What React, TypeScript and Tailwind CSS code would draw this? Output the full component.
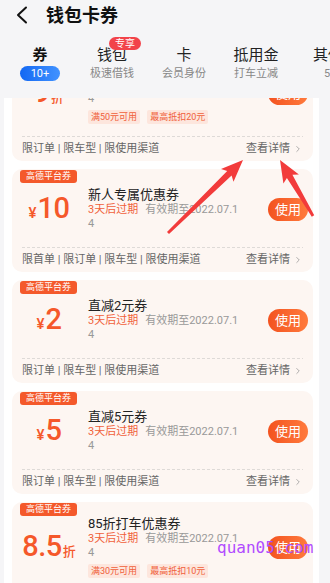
import { ChevronRight } from "lucide-react";

type Coupon = {
  amount: string;
  unit: "yuan" | "zhe";
  title: string;
  limits: string;
  tags?: string[];
};

const coupons: Coupon[] = [
  {
    amount: "9",
    unit: "zhe",
    title: "打车折扣券",
    limits: "限订单 | 限车型 | 限使用渠道",
    tags: ["满50元可用", "最高抵扣20元"],
  },
  { amount: "10", unit: "yuan", title: "新人专属优惠券", limits: "限首单 | 限订单 | 限车型 | 限使用渠道" },
  { amount: "2", unit: "yuan", title: "直减2元券", limits: "限订单 | 限车型 | 限使用渠道" },
  { amount: "5", unit: "yuan", title: "直减5元券", limits: "限订单 | 限车型 | 限使用渠道" },
  {
    amount: "8.5",
    unit: "zhe",
    title: "85折打车优惠券",
    limits: "限订单 | 限车型 | 限使用渠道",
    tags: ["满30元可用", "最高抵扣10元"],
  },
];

const tabs = [
  { label: "钱包", sub: "极速借钱", badge: "专享" },
  { label: "卡", sub: "会员身份" },
  { label: "抵用金", sub: "打车立减" },
];

function arrowPoints(x1: number, y1: number, x2: number, y2: number) {
  const dx = x2 - x1;
  const dy = y2 - y1;
  const len = Math.hypot(dx, dy);
  const ux = dx / len;
  const uy = dy / len;
  const nx = -uy;
  const ny = ux;
  const head = 22;
  const bx = x2 - ux * head;
  const by = y2 - uy * head;
  const pts = [
    [x1 + nx * 1.4, y1 + ny * 1.4],
    [bx + ux * 3 + nx * 3.2, by + uy * 3 + ny * 3.2],
    [bx + nx * 9, by + ny * 9],
    [x2, y2],
    [bx - nx * 9, by - ny * 9],
    [bx + ux * 3 - nx * 3.2, by + uy * 3 - ny * 3.2],
    [x1 - nx * 1.4, y1 - ny * 1.4],
  ];
  return pts.map((p) => `${p[0].toFixed(1)},${p[1].toFixed(1)}`).join(" ");
}

function CouponCard({ c }: { c: Coupon }) {
  return (
    <div className="relative ml-[8px] w-[301px] shrink-0 rounded-[10px] bg-[#fdf6f2] px-[10px] pt-[14px]">
      <span className="absolute left-[8px] top-[1px] h-[13px] rounded-[3px] bg-[#f4592b] px-[6px] text-[9px] leading-[13px] text-white">
        高德平台券
      </span>
      <div className="flex min-h-[52px] items-center">
        <div className="flex w-[54px] items-baseline justify-center text-[#f5582a]">
          {c.unit === "yuan" && <span className="mr-[1px] text-[15px] font-medium">¥</span>}
          <span className="text-[29px] font-medium leading-none tracking-[-0.5px]">{c.amount}</span>
          {c.unit === "zhe" && <span className="ml-[1px] text-[13px] font-medium">折</span>}
        </div>
        <div className="ml-[12px] w-[150px]">
          <div className="text-[13px] leading-[16px] text-[#222]">{c.title}</div>
          <div className="whitespace-nowrap text-[11px] leading-[14px] text-[#999]">
            <span className="mr-[7px] text-[#f0613a]">3天后过期</span>
            有效期至2022.07.1
          </div>
          <div className="text-[11px] leading-[14px] text-[#999]">4</div>
          {c.tags && (
            <div className="mt-[4px] flex gap-[7px]">
              {c.tags.map((t) => (
                <span key={t} className="h-[14px] rounded-[2px] bg-[#fde6dd] px-[3px] text-[9px] leading-[14px] text-[#f0603a]">
                  {t}
                </span>
              ))}
            </div>
          )}
        </div>
        <button className="-mr-[5px] ml-auto h-[23px] w-[40px] rounded-full bg-linear-to-r from-[#f3521f] to-[#ff7a3c] text-[13px] leading-[23px] text-white">
          使用
        </button>
      </div>
      <div className="mt-[12px] h-px bg-[repeating-linear-gradient(to_right,#dedad7_0_3px,transparent_3px_5px)]" />
      <div className="flex h-[24px] items-center text-[11px] text-[#666]">
        <span>{c.limits}</span>
        <span className="ml-auto flex items-center gap-[3px]">
          查看详情
          <ChevronRight size={10} strokeWidth={1.6} className="text-[#888]" />
        </span>
      </div>
    </div>
  );
}

export default function App() {
  return (
    <div className="relative h-[583px] w-[330px] overflow-hidden bg-[#f5f5f7] font-['Roboto','Noto_Sans_CJK_SC',sans-serif]">
      <div className="flex h-[30px] items-center">
        <svg width="12" height="18" viewBox="0 0 12 18" className="ml-[16px]">
          <polyline points="10,1.5 2,9 10,16.5" fill="none" stroke="#111" strokeWidth="2" strokeLinecap="round" strokeLinejoin="round" />
        </svg>
        <h1 className="ml-[18px] text-[18px] font-bold text-[#111]">钱包卡券</h1>
      </div>

      <div className="ml-[4px] flex whitespace-nowrap pb-[17px] pt-[15px]">
        <div className="flex w-[72px] shrink-0 flex-col items-center">
          <span className="text-[15px] font-bold leading-[20px] text-[#111]">券</span>
          <span className="mt-[1px] h-[15px] w-[40px] rounded-full bg-linear-to-r from-[#1268f3] to-[#4192ff] text-center text-[11px] leading-[15px] text-white">
            10+
          </span>
        </div>
        {tabs.map((t) => (
          <div key={t.label} className="flex w-[72px] shrink-0 flex-col items-center">
            <span className="relative text-[15px] leading-[20px] text-[#222]">
              {t.label}
              {t.badge && (
                <span className="absolute -top-[8px] left-[12px] h-[13px] rounded-full bg-[#f2434a] px-[6px] text-[10px] leading-[13px] text-white">
                  {t.badge}
                </span>
              )}
            </span>
            <span className="mt-[1px] text-[11px] leading-[15px] text-[#888]">{t.sub}</span>
          </div>
        ))}
        <div className="flex w-[72px] shrink-0 flex-col items-start pl-[21px]">
          <span className="text-[15px] leading-[20px] text-[#222]">其他</span>
          <span className="mt-[1px] pl-[11px] text-[11px] leading-[15px] text-[#888]">5张可用</span>
        </div>
      </div>

      <div className="ml-[4px] h-[485px] w-[315px] overflow-hidden bg-white">
        <div className="-mt-[50px] flex flex-col gap-[8px]">
          {coupons.map((c) => (
            <CouponCard key={c.title} c={c} />
          ))}
        </div>
      </div>

      <svg className="pointer-events-none absolute left-0 top-0" width="330" height="583">
        <polygon points={arrowPoints(168, 233, 243, 160)} fill="#f23b3b" />
        <polygon points={arrowPoints(313, 216, 280, 160)} fill="#f23b3b" />
      </svg>

      <span className="pointer-events-none absolute left-[217px] top-[538px] font-['DejaVu_Sans_Mono',monospace] text-[16px] leading-[20px] text-[#b14cff]">
        quan05.com
      </span>
    </div>
  );
}
